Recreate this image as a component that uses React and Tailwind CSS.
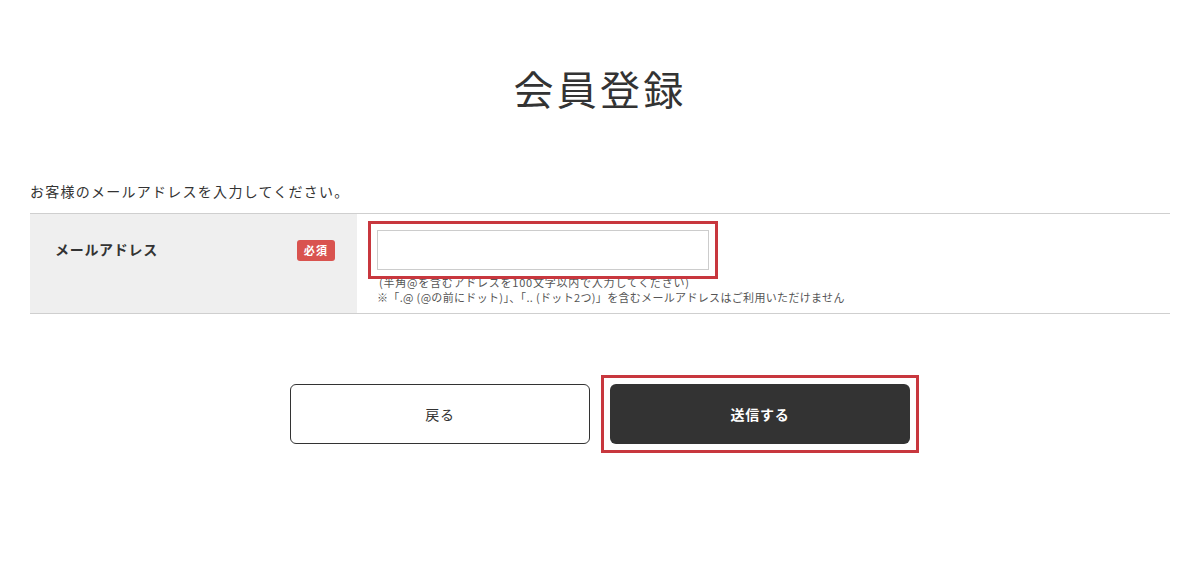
export default function App() {
  const font = { fontFamily: '"Noto Sans CJK JP", "Noto Sans", sans-serif' };
  return (
    <div className="w-[1200px] h-[564px] bg-white text-[#333]" style={font}>
      <div className="px-[30px]">
        <h1 className="pt-[58px] text-center text-[40px] leading-[60px] tracking-[0.08em] font-normal text-[#333]">会員登録</h1>
        <p className="mt-[63px] text-[14px] leading-[20px] tracking-[0.09em]">お客様のメールアドレスを入力してください。</p>
        <div className="mt-[12px] flex border-t border-b border-[#cfcfcf]">
          <div className="w-[327px] bg-[#efefef] flex items-start justify-between pl-[25px] pr-[22px] pt-[25px]">
            <span className="text-[14px] leading-[20px] font-bold tracking-[0.05em]">メールアドレス</span>
            <span className="mt-[1px] bg-[#d9534f] text-white text-[11px] font-bold leading-[21px] h-[21px] px-[7px] rounded-[3px] tracking-[0.1em]">必須</span>
          </div>
          <div className="flex-1 pl-[20px] pt-[16px] pb-[8px]">
            <div className="relative w-[332px]">
              <input type="text" className="block w-[332px] h-[40px] border border-[#cccccc] bg-white" />
              <span className="absolute -inset-[9px] border-[3px] border-[#c8373e] pointer-events-none"></span>
            </div>
            <p className="mt-[5px] pl-[2px] text-[11px] leading-[15px] tracking-[0.07em] text-[#555]">(半角@を含むアドレスを100文字以内で入力してください)</p>
            <p className="text-[11px] leading-[15px] tracking-[0.03em] text-[#555]">※「.@ (@の前にドット)」、「.. (ドット2つ)」を含むメールアドレスはご利用いただけません</p>
          </div>
        </div>
        <div className="mt-[70px] flex justify-center gap-[20px]">
          <button className="w-[300px] h-[60px] border border-[#333] rounded-[6px] bg-white text-[14px] tracking-[0.05em] text-[#333]">戻る</button>
          <div className="relative">
            <button className="w-[300px] h-[60px] rounded-[6px] bg-[#333] text-white text-[14px] font-bold tracking-[0.05em]">送信する</button>
            <span className="absolute -inset-[9px] border-[3px] border-[#c8373e] pointer-events-none"></span>
          </div>
        </div>
      </div>
    </div>
  );
}
